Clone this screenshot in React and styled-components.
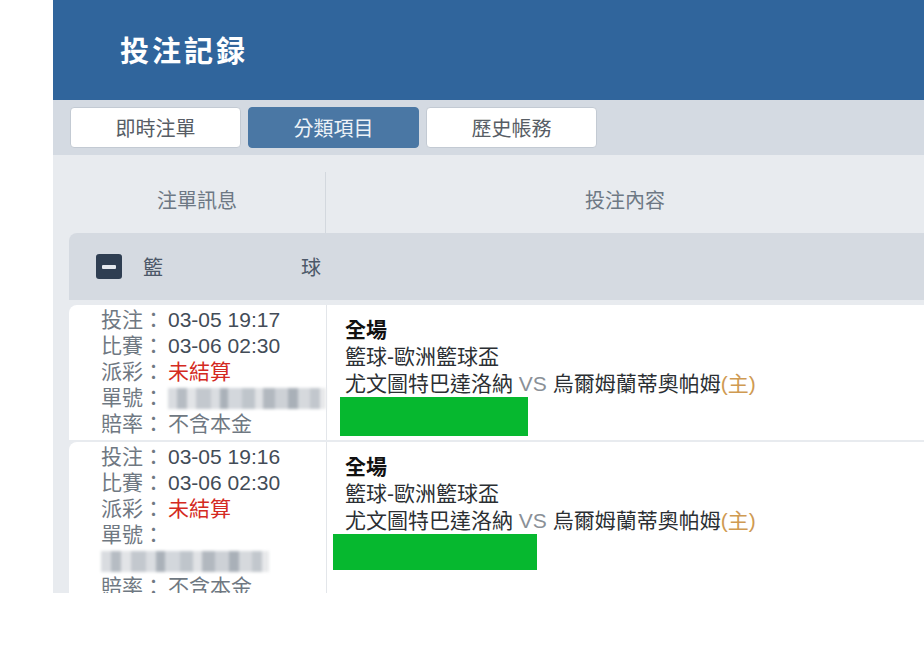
import styled, { createGlobalStyle } from "styled-components";

const GlobalStyle = createGlobalStyle`
  html, body {
    margin: 0;
    padding: 0;
    background: #ffffff;
  }
  body {
    font-family: "Liberation Sans", "Noto Sans CJK TC", sans-serif;
  }
`;

const bets = [
  {
    placed: "03-05 19:17",
    match: "03-06 02:30",
    wrapId: false,
    green: { left: -5, width: 188, height: 39 },
  },
  {
    placed: "03-05 19:16",
    match: "03-06 02:30",
    wrapId: true,
    green: { left: -12, width: 204, height: 36 },
  },
];

function App() {
  return (
    <>
      <GlobalStyle />
      <Page>
        <Panel>
          <Header>投注記録</Header>
          <TabBar>
            <Tab>即時注單</Tab>
            <Tab active>分類項目</Tab>
            <Tab>歷史帳務</Tab>
          </TabBar>
          <Content>
            <ColHeader>
              <ColTitle divider>注單訊息</ColTitle>
              <ColTitle>投注內容</ColTitle>
            </ColHeader>
            <GroupRow>
              <MinusBox>
                <MinusBar />
              </MinusBox>
              <GroupLabel>
                <span>籃</span>
                <span>球</span>
              </GroupLabel>
            </GroupRow>
            {bets.map((b, i) => (
              <BetRow key={i}>
                <InfoCell>
                  <Line>
                    <Label>投注：</Label>
                    <Value>{b.placed}</Value>
                  </Line>
                  <Line>
                    <Label>比賽：</Label>
                    <Value>{b.match}</Value>
                  </Line>
                  <Line>
                    <Label>派彩：</Label>
                    <Value red>未結算</Value>
                  </Line>
                  {b.wrapId ? (
                    <>
                      <Line>
                        <Label>單號：</Label>
                      </Line>
                      <Line>
                        <Pixelated width={168} />
                      </Line>
                    </>
                  ) : (
                    <Line>
                      <Label>單號：</Label>
                      <Pixelated width={160} shift />
                    </Line>
                  )}
                  <Line>
                    <Label>賠率：</Label>
                    <Value light>不含本金</Value>
                  </Line>
                </InfoCell>
                <DetailCell>
                  <Period>全場</Period>
                  <League>籃球-歐洲籃球盃</League>
                  <Teams>
                    尤文圖特巴達洛納<Vs> VS </Vs>烏爾姆蘭蒂奧帕姆<Home>(主)</Home>
                  </Teams>
                  <Redacted
                    $left={b.green.left}
                    $width={b.green.width}
                    $height={b.green.height}
                  />
                </DetailCell>
              </BetRow>
            ))}
          </Content>
        </Panel>
      </Page>
    </>
  );
}

export default App;

const Page = styled.div`
  min-height: 657px;
  padding-left: 53px;
  background: #ffffff;
`;

const Panel = styled.div`
  width: 871px;
  display: flex;
  flex-direction: column;
`;

const Header = styled.div`
  height: 100px;
  background: #30659c;
  display: flex;
  align-items: center;
  padding-left: 67px;
  color: #ffffff;
  font-family: "Liberation Serif", "Noto Sans CJK TC", serif;
  font-weight: 700;
  font-size: 29px;
  letter-spacing: 3px;
  padding-bottom: 2px;
  box-sizing: border-box;
`;

const TabBar = styled.div`
  height: 55px;
  box-sizing: border-box;
  background: #d4dae2;
  display: flex;
  gap: 7px;
  padding: 7px 17px;
`;

const Tab = styled.div`
  width: 171px;
  height: 41px;
  box-sizing: border-box;
  border-radius: 4px;
  border: 1px solid ${(p) => (p.active ? "#4a77a4" : "#c3cad3")};
  background: ${(p) => (p.active ? "#4a77a4" : "#ffffff")};
  color: ${(p) => (p.active ? "#eef3f8" : "#575d65")};
  display: flex;
  align-items: center;
  justify-content: center;
  font-size: 20px;
`;

const Content = styled.div`
  height: 438px;
  overflow: hidden;
  background: #e8ebef;
  padding-left: 16px;
`;

const ColHeader = styled.div`
  display: grid;
  grid-template-columns: 257px 1fr;
  padding-top: 17px;
  height: 78px;
  box-sizing: border-box;
`;

const ColTitle = styled.div`
  display: flex;
  align-items: center;
  justify-content: center;
  padding-bottom: 6px;
  font-size: 20px;
  color: #6d7884;
  border-right: ${(p) => (p.divider ? "1px solid #d3d8de" : "none")};
`;

const GroupRow = styled.div`
  height: 67px;
  background: #d5dae1;
  border-radius: 8px 0 0 0;
  display: flex;
  align-items: center;
  padding-left: 27px;
  margin-bottom: 5px;
`;

const MinusBox = styled.div`
  width: 26px;
  height: 25px;
  border-radius: 3px;
  background: #2f3e52;
  display: flex;
  align-items: center;
  justify-content: center;
`;

const MinusBar = styled.div`
  width: 14px;
  height: 4px;
  background: #e4e8ee;
  border-radius: 1px;
`;

const GroupLabel = styled.div`
  margin-left: 21px;
  width: 178px;
  display: flex;
  justify-content: space-between;
  font-size: 20px;
  color: #4c5868;
`;

const BetRow = styled.div`
  display: grid;
  grid-template-columns: 257px 1fr;
  background: #ffffff;
  border-radius: 8px 0 0 0;
  margin-bottom: 2px;
  min-height: 135px;
`;

const InfoCell = styled.div`
  padding: 2px 0 3px 32px;
  font-size: 21px;
  line-height: 26px;
`;

const Line = styled.div`
  display: flex;
  align-items: center;
  height: 26px;
  white-space: nowrap;
`;

const Label = styled.span`
  color: #6f7882;
`;

const Value = styled.span`
  margin-left: 4px;
  color: ${(p) => (p.red ? "#d42a22" : p.light ? "#6f7882" : "#434c57")};
`;

const Pixelated = styled.span`
  display: inline-block;
  width: ${(p) => p.width}px;
  height: 21px;
  margin-left: ${(p) => (p.shift ? "4px" : "0")};
  filter: blur(1.6px);
  background: linear-gradient(
    90deg,
    #d9dce0 0 6%,
    #b6bcc3 6% 12%,
    #e2e4e7 12% 18%,
    #c3c8ce 18% 27%,
    #dadde1 27% 33%,
    #aab1b9 33% 38%,
    #d3d7dc 38% 47%,
    #bfc5cb 47% 55%,
    #e0e2e5 55% 60%,
    #b2b8bf 60% 68%,
    #cdd1d6 68% 76%,
    #a9b0b8 76% 82%,
    #d6d9dd 82% 90%,
    #c2c7cd 90% 96%,
    #e8e9eb 96% 100%
  );
`;

const DetailCell = styled.div`
  border-left: 1px solid #e3e6ea;
  padding: 11px 0 0 18px;
  font-size: 21px;
  line-height: 27px;
  color: #2b2f33;
`;

const Period = styled.div`
  font-weight: 700;
  color: #111111;
`;

const League = styled.div`
  color: #2b2f33;
`;

const Teams = styled.div`
  white-space: nowrap;
  color: #2b2f33;
`;

const Vs = styled.span`
  color: #8a9097;
`;

const Home = styled.span`
  color: #cf9a52;
`;

const Redacted = styled.div`
  margin-left: ${(p) => p.$left}px;
  width: ${(p) => p.$width}px;
  height: ${(p) => p.$height}px;
  background: #06b82f;
`;
